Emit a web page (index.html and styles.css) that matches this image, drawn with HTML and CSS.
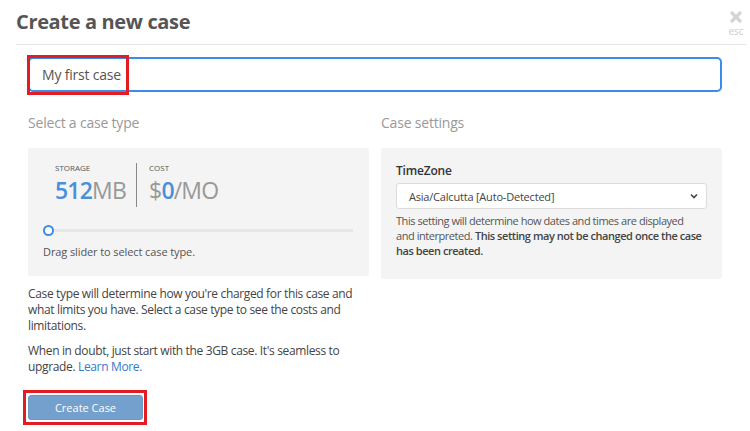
FILE: index.html
```html
<!DOCTYPE html>
<html>
<head>
<meta charset="utf-8">
<link rel="stylesheet" href="styles.css">
</head>
<body>
<div class="modal">
  <header class="head">
    <h1 class="title">Create a new case</h1>
    <div class="close">
      <svg width="12" height="12" viewBox="0 0 12 12"><path d="M2 2 L10 10 M10 2 L2 10" stroke="#d4d4d4" stroke-width="3.2" stroke-linecap="round"/></svg>
      <span class="esc">esc</span>
    </div>
  </header>
  <div class="body">
    <div class="name-wrap">
      <div class="name-input">My first case</div>
      <div class="hl hl-input"></div>
    </div>
    <div class="cols">
      <div class="col">
        <h2 class="sec">Select a case type</h2>
        <div class="panel type-panel">
          <div class="stats">
            <div class="stat">
              <div class="lbl">STORAGE</div>
              <div class="val"><span class="num">512</span>MB</div>
            </div>
            <div class="sep"></div>
            <div class="stat">
              <div class="lbl">COST</div>
              <div class="val">$<span class="num">0</span>/MO</div>
            </div>
          </div>
          <div class="slider"><span class="knob"></span><span class="track"></span></div>
          <div class="hint">Drag slider to select case type.</div>
        </div>
        <p class="para">Case type will determine how you're charged for this case and what limits you have. Select a case type to see the costs and limitations.</p>
        <p class="para">When in doubt, just start with the 3GB case. It's seamless to upgrade. <a class="link">Learn More.</a></p>
        <div class="btn-wrap">
          <button class="btn">Create Case</button>
          <div class="hl hl-btn"></div>
        </div>
      </div>
      <div class="col">
        <h2 class="sec">Case settings</h2>
        <div class="panel set-panel">
          <div class="tz">TimeZone</div>
          <div class="select"><span>Asia/Calcutta [Auto-Detected]</span>
            <svg width="8" height="6" viewBox="0 0 8 6"><path d="M1 1.5 L4 4.5 L7 1.5" stroke="#444" stroke-width="1.6" fill="none"/></svg>
          </div>
          <p class="help">This setting will determine how dates and times are displayed<br>and interpreted. <b>This setting may not be changed once the case has been created.</b></p>
        </div>
      </div>
    </div>
  </div>
</div>
</body>
</html>
```
FILE: styles.css
```css
* { box-sizing: border-box; }
body {
  margin: 0;
  font-family: "Open Sans", "Noto Sans", sans-serif;
  color: #444;
  background: #fff;
}
.modal { width: 750px; height: 431px; overflow: hidden; }
.head {
  display: flex;
  justify-content: space-between;
  align-items: flex-start;
  margin: 0 4px 0 16px;
  height: 45px;
  border-bottom: 1px solid #e5e5e5;
}
.title {
  margin: 0;
  padding-top: 8px;
  font-size: 20px;
  font-weight: 700;
  color: #555;
  letter-spacing: -0.35px;
}
.close {
  display: flex;
  flex-direction: column;
  align-items: center;
  padding-top: 11px;
  width: 20px;
}
.esc { font-size: 10px; color: #ccc; line-height: 12px; margin-top: 2px; }
.body { padding: 12px 28px 0 28px; }
.name-wrap { position: relative; }
.name-input {
  height: 35px;
  border: 2px solid #3b8beb;
  border-radius: 5px;
  padding: 0 12px;
  font-size: 14px;
  line-height: 31px;
  color: #555;
  letter-spacing: -0.2px;
}
.hl { position: absolute; border: 3px solid #e31b23; }
.hl-input { left: -1px; top: -2px; width: 102px; height: 40px; }
.cols {
  display: grid;
  grid-template-columns: 341px 341px;
  column-gap: 12px;
}
.sec {
  margin: 21px 0 15px;
  font-size: 14px;
  font-weight: 400;
  color: #999;
  line-height: 20px;
  letter-spacing: -0.2px;
}
.panel { background: #f4f4f4; border-radius: 3px; }
.type-panel { height: 128px; padding: 14px 15px 0 15px; }
.stats { display: flex; align-items: flex-start; padding-left: 12px; }
.stat { display: flex; flex-direction: column; }
.lbl { font-size: 8px; color: #555; line-height: 12px; }
.val { font-size: 23px; color: #999; line-height: 30px; letter-spacing: -0.8px; margin-top: 1px; }
.num { color: #4a90d9; font-weight: 600; }
.sep { width: 1px; background: #888; margin: 1px 12px 0 10px; height: 44px; }
.slider { display: flex; align-items: center; margin-top: 18px; }
.knob {
  width: 11px; height: 11px;
  border: 2px solid #3b8beb; border-radius: 50%;
  background: #fff;
}
.track { flex: 1; height: 3px; background: #e6e6e6; margin-right: 1px; }
.hint { font-size: 11px; color: #555; margin-top: 8px; line-height: 15px; letter-spacing: -0.1px; }
.para {
  font-size: 12px;
  line-height: 16px;
  color: #444;
  margin: 10px 0 0;
  letter-spacing: -0.35px;
}
.para + .para { margin-top: 9px; }
.link { color: #3a78c9; }
.btn-wrap { position: relative; margin-top: 20px; width: 115px; }
.btn {
  display: block;
  width: 115px; height: 25px;
  background: #73a0cc;
  border: 1px solid #6c98c4;
  border-radius: 3px;
  color: #fff;
  font-family: inherit;
  font-size: 11px;
  padding: 0;
}
.hl-btn { left: -5px; top: -5px; width: 124px; height: 35px; }
.set-panel { height: 131px; padding: 14px 15px 0 15px; }
.tz { font-size: 12px; font-weight: 600; color: #333; line-height: 18px; letter-spacing: -0.2px; }
.select {
  margin-top: 3px;
  height: 26px;
  background: #fff;
  border: 1px solid #dcdcdc;
  border-radius: 3px;
  display: flex;
  align-items: center;
  justify-content: space-between;
  padding: 0 8px 0 12px;
  font-size: 11px;
  color: #444;
  letter-spacing: -0.2px;
}
.help {
  margin: 4px 0 0;
  font-size: 11px;
  line-height: 15px;
  color: #555;
  letter-spacing: -0.45px;
}
.help b { font-weight: 600; color: #444; }
```
